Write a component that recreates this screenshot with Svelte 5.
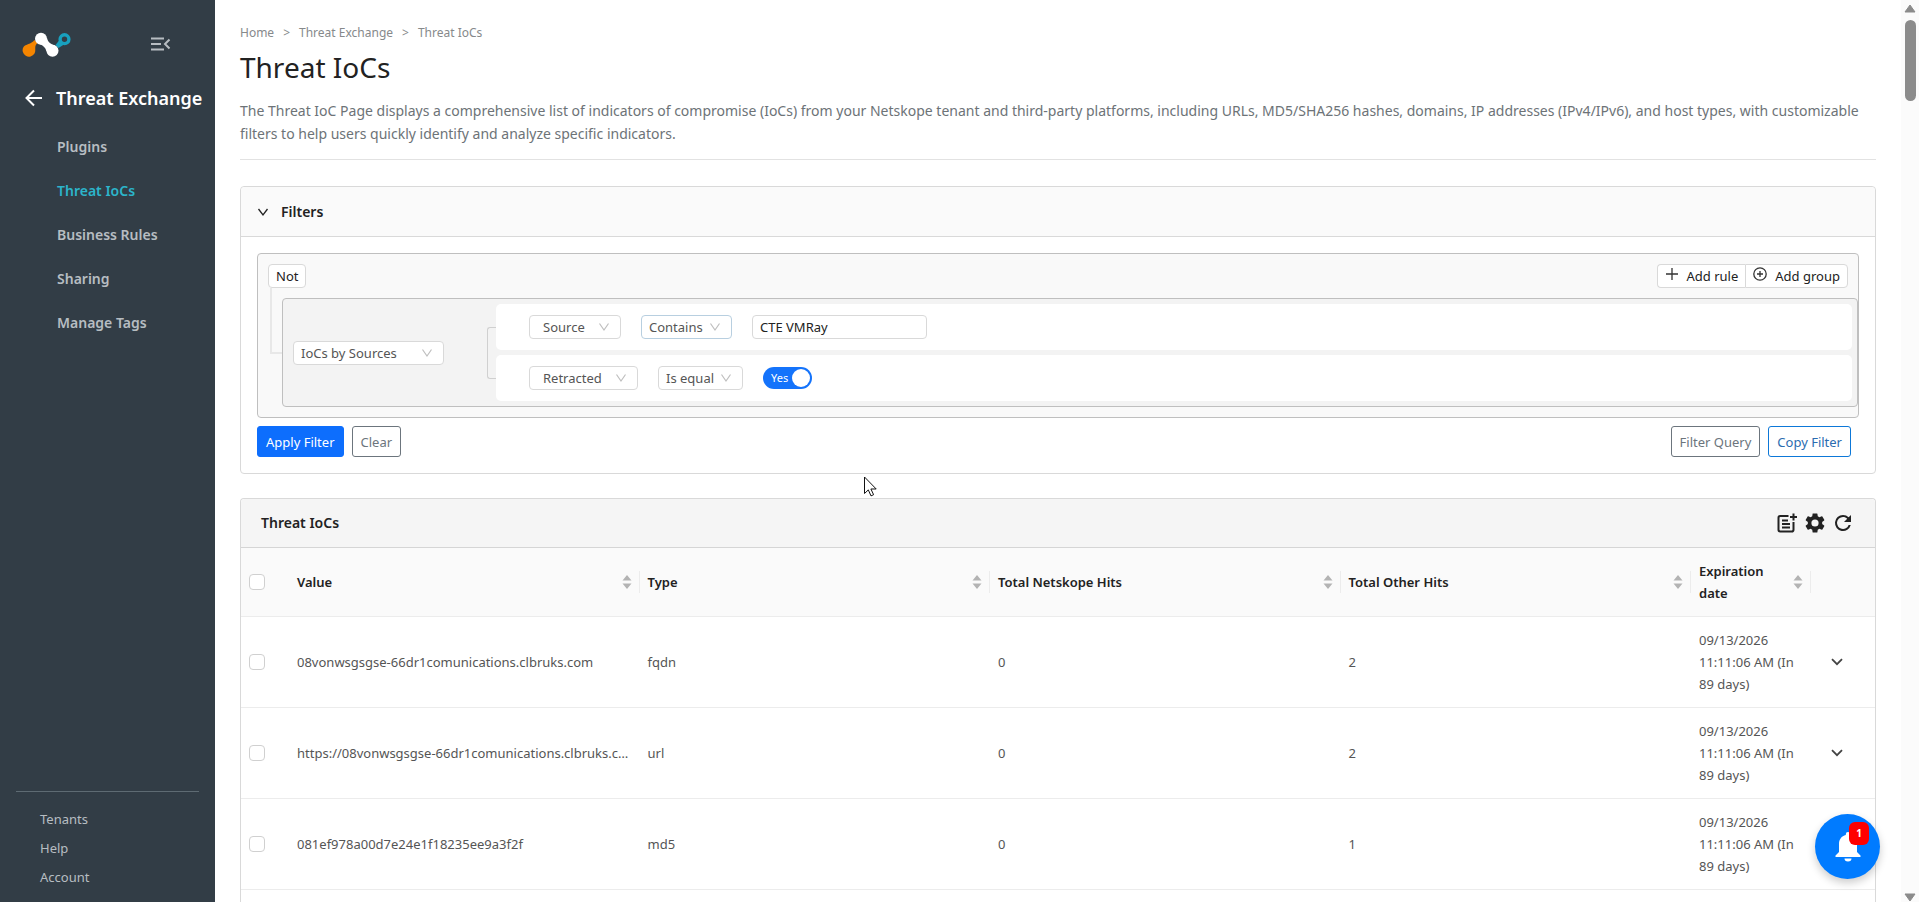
<script>
	const navItems = ["Plugins", "Threat IoCs", "Business Rules", "Sharing", "Manage Tags"];
	const footerItems = ["Tenants", "Help", "Account"];

	const columns = [
		{ key: "value", label: "Value" },
		{ key: "type", label: "Type" },
		{ key: "netskope", label: "Total Netskope Hits" },
		{ key: "other", label: "Total Other Hits" },
		{ key: "expiration", label: "Expiration date" },
	];

	const expiration = "09/13/2026 11:11:06 AM (In 89 days)";
	const rows = [
		{ value: "08vonwsgsgse-66dr1comunications.clbruks.com", type: "fqdn", netskope: 0, other: 2, expiration },
		{ value: "https://08vonwsgsgse-66dr1comunications.clbruks.com", type: "url", netskope: 0, other: 2, expiration },
		{ value: "081ef978a00d7e24e1f18235ee9a3f2f", type: "md5", netskope: 0, other: 1, expiration },
	];

	let activeItem = $state("Threat IoCs");
	let filtersOpen = $state(true);
	let sourceValue = $state("CTE VMRay");
	let retracted = $state(true);
	let selected = $state([]);

	function toggleAll(event) {
		selected = event.currentTarget.checked ? rows.map((row) => row.value) : [];
	}
</script>

{#snippet dropdown(label, text, size)}
	<span class="select select-{size}">
		<select aria-label={label}>
			<option>{text}</option>
		</select>
		<svg viewBox="0 0 12 12" aria-hidden="true"><path d="M1.5 2.5L6 9l4.5-6.5" /></svg>
	</span>
{/snippet}

<div class="app">
	<aside class="sidebar">
		<div class="brand">
			<svg class="logo" viewBox="0 0 50 26" role="img" aria-label="Netskope">
				<path d="M1.500 15C3.500 12 9 12.500 12.500 8L15.500 11C11.500 14 14.500 18 12.500 21.500A6.200 6.200 0 1 1 1.500 15Z" fill="#f58500" />
				<path d="M37.500 8L33.500 13L36.500 16L42 12.500Z" fill="#18a0be" />
				<circle cx="42.500" cy="7.200" r="4.400" fill="none" stroke="#18a0be" stroke-width="3.400" />
				<circle cx="19" cy="6.700" r="6" fill="#fff" />
				<circle cx="30.500" cy="18.800" r="6" fill="#fff" />
				<path d="M16 11.500C20.500 13 23.500 15 24.500 19.500L33.500 13.500C29 12.500 26 10.500 25 6Z" fill="#fff" />
			</svg>
			<button class="icon-button collapse" aria-label="Collapse menu">
				<svg viewBox="0 0 20 14" aria-hidden="true"><path d="M0 1.500h13M0 7h10M0 12.500h13M18.500 2.500L14 7l4.500 4.500" /></svg>
			</button>
		</div>
		<div class="section">
			<button class="icon-button back" aria-label="Back">
				<svg viewBox="0 0 18 18" aria-hidden="true"><path d="M17 9H2M9 1.500L1.500 9L9 16.500" /></svg>
			</button>
			<span class="section-name">Threat Exchange</span>
		</div>
		<nav class="nav">
			{#each navItems as item (item)}
				<a href="#/" class:active={activeItem === item} onclick={() => (activeItem = item)}>{item}</a>
			{/each}
		</nav>
		<nav class="footer-nav">
			{#each footerItems as item (item)}
				<a href="#/">{item}</a>
			{/each}
		</nav>
	</aside>

	<main class="main">
		<nav class="breadcrumb" aria-label="Breadcrumb">
			<a href="#/">Home</a>
			<span>&gt;</span>
			<a href="#/">Threat Exchange</a>
			<span>&gt;</span>
			<a href="#/">Threat IoCs</a>
		</nav>
		<h1>Threat IoCs</h1>
		<p class="description">
			The Threat IoC Page displays a comprehensive list of indicators of compromise (IoCs) from your Netskope tenant and third-party platforms, including URLs, MD5/SHA256 hashes, domains, IP addresses (IPv4/IPv6), and host types, with customizable filters to help users quickly identify and analyze specific indicators.
		</p>

		<section class="panel filters">
			<button class="filters-header" aria-expanded={filtersOpen} onclick={() => (filtersOpen = !filtersOpen)}>
				<svg viewBox="0 0 12 12" aria-hidden="true"><path d="M1.500 3L6 9l4.500-6" /></svg>
				Filters
			</button>
			{#if filtersOpen}
				<div class="filters-body">
					<div class="group">
						<div class="group-header">
							<button class="small-button">Not</button>
							<div class="button-group">
								<button class="small-button">
									<svg viewBox="0 0 14 14" aria-hidden="true"><path d="M7 1v12M1 7h12" /></svg>
									Add rule
								</button>
								<button class="small-button">
									<svg viewBox="0 0 14 14" aria-hidden="true"><circle cx="7" cy="7" r="6.200" /><path d="M7 4v6M4 7h6" /></svg>
									Add group
								</button>
							</div>
						</div>
						<div class="group-children">
							<span class="branch"></span>
							<div class="rule-group">
								<div class="rule-field">
									{@render dropdown("Group field", "IoCs by Sources", "large")}
								</div>
								<span class="fork"></span>
								<div class="rules">
									<div class="rule">
										{@render dropdown("Field", "Source", "source")}
										{@render dropdown("Operator", "Contains", "contains")}
										<input class="text-input" type="text" aria-label="Source value" bind:value={sourceValue} />
									</div>
									<div class="rule">
										{@render dropdown("Field", "Retracted", "retracted")}
										{@render dropdown("Operator", "Is equal", "equal")}
										<label class="switch" class:off={!retracted}>
											<input type="checkbox" role="switch" bind:checked={retracted} />
											<span>{retracted ? "Yes" : "No"}</span>
										</label>
									</div>
								</div>
							</div>
						</div>
					</div>
					<div class="actions">
						<button class="button primary">Apply Filter</button>
						<button class="button">Clear</button>
						<button class="button push">Filter Query</button>
						<button class="button outline">Copy Filter</button>
					</div>
				</div>
			{/if}
		</section>

		<section class="panel iocs">
			<header class="iocs-header">
				<h2>Threat IoCs</h2>
				<div class="tools">
					<button class="icon-button" aria-label="Add columns">
						<svg viewBox="0 0 20 20" aria-hidden="true">
							<path d="M11.500 3H3.300C2.300 3 1.500 3.800 1.500 4.800V16.700C1.500 17.700 2.300 18.500 3.300 18.500H14.700C15.700 18.500 16.500 17.700 16.500 16.700V9M5 7.500H11M5 11H13M5 14.500H13M16.500 .5V7.500M13 4H20" />
						</svg>
					</button>
					<button class="icon-button" aria-label="Settings">
						<svg class="filled" viewBox="2 2 20 20" aria-hidden="true">
							<path d="M19.140 12.940c.040-.3.060-.610.060-.940s-.020-.640-.070-.940l2.030-1.580a.49.49 0 0 0 .12-.61l-1.920-3.320a.488.488 0 0 0-.59-.22l-2.390.96c-.5-.38-1.030-.7-1.620-.94l-.36-2.540a.484.484 0 0 0-.48-.41h-3.840c-.24 0-.43.170-.470.410l-.36 2.540c-.59.240-1.130.570-1.620.940l-2.390-.96c-.22-.08-.47 0-.59.220L2.740 8.870c-.12.210-.08.470.12.610l2.030 1.580c-.05.3-.09.630-.09.940s.020.640.070.940l-2.030 1.580a.49.49 0 0 0-.12.610l1.920 3.320c.12.220.37.290.59.220l2.390-.96c.5.380 1.030.7 1.620.940l.36 2.540c.05.240.24.410.48.410h3.840c.24 0 .44-.17.470-.41l.36-2.540c.59-.24 1.130-.56 1.620-.94l2.390.96c.22.080.47 0 .59-.22l1.920-3.320c.12-.22.070-.47-.12-.61l-2.010-1.580zM12 15.600a3.600 3.600 0 1 1 0-7.200 3.600 3.600 0 0 1 0 7.200z" />
						</svg>
					</button>
					<button class="icon-button" aria-label="Refresh">
						<svg class="filled" viewBox="2 2 20 20" aria-hidden="true">
							<path d="M17.650 6.350A7.960 7.960 0 0 0 12 4a8 8 0 1 0 7.730 10h-2.080A6 6 0 1 1 12 6c1.660 0 3.140.690 4.220 1.780L13 11h7V4l-2.350 2.350z" />
						</svg>
					</button>
				</div>
			</header>
			<table>
				<colgroup>
					<col class="col-check" />
					<col />
					<col />
					<col />
					<col />
					<col class="col-date" />
					<col class="col-expand" />
				</colgroup>
				<thead>
					<tr>
						<th><input class="check" type="checkbox" aria-label="Select all" onchange={toggleAll} /></th>
						{#each columns as column (column.key)}
							<th>
								<div class="column-title">
									<span>{column.label}</span>
									<svg viewBox="0 0 10 14" aria-hidden="true"><path d="M5 0l4.500 5.500h-9zM5 14l4.500-5.500h-9z" /></svg>
								</div>
							</th>
						{/each}
						<th></th>
					</tr>
				</thead>
				<tbody>
					{#each rows as row (row.value)}
						<tr>
							<td><input class="check" type="checkbox" aria-label="Select {row.value}" value={row.value} bind:group={selected} /></td>
							{#each columns as column (column.key)}
								<td class:ellipsis={column.key === "value"}>{row[column.key]}</td>
							{/each}
							<td class="expand">
								<button class="icon-button" aria-label="Expand row">
									<svg viewBox="0 0 12 8" aria-hidden="true"><path d="M1 1.200L6 6.200l5-5" /></svg>
								</button>
							</td>
						</tr>
					{/each}
				</tbody>
			</table>
		</section>
	</main>

	<div class="scrollbar" aria-hidden="true">
		<svg viewBox="0 0 12 9"><path d="M6 1L11 8H1z" /></svg>
		<span></span>
		<svg viewBox="0 0 12 9"><path d="M6 8L11 1H1z" /></svg>
	</div>

	<button class="notifications" aria-label="Notifications">
		<svg viewBox="0 0 26 30" aria-hidden="true">
			<path d="M13 0a2.200 2.200 0 0 0-2.200 2.200v.8C6.500 4 4 7.500 4 12v8l-3.500 3.500V25h25v-1.500L22 20v-8c0-4.500-2.500-8-6.800-9v-.8A2.200 2.200 0 0 0 13 0zM9.500 26.500a3.500 3 0 0 0 7 0z" />
		</svg>
		<span class="badge">1</span>
	</button>

	<svg class="pointer" viewBox="0 0 13 21" aria-hidden="true">
		<path d="M.5 1v16.500l3.800-3.600 2.700 6 2.600-1.200-2.700-5.700h5.300z" />
	</svg>
</div>

<style>
	:global(body) {
		background: #fff;
		font-family: "Noto Sans", "Open Sans", sans-serif;
		font-size: 13px;
		line-height: 22px;
		color: #555;
	}

	.app,
	.app * {
		box-sizing: border-box;
	}

	.app {
		display: grid;
		grid-template-columns: 215px minmax(0, 1fr) 18px;
		height: 100vh;
	}

	a {
		color: inherit;
		text-decoration: none;
	}

	button,
	input,
	select {
		font: inherit;
		color: inherit;
		margin: 0;
	}

	button {
		cursor: pointer;
	}

	.icon-button {
		display: flex;
		padding: 0;
		border: 0;
		background: none;
	}

	/* sidebar */
	.sidebar {
		display: flex;
		flex-direction: column;
		background: #323d46;
		color: #b7bdc2;
	}

	.brand {
		display: flex;
		align-items: flex-start;
		justify-content: space-between;
		padding: 32px 44px 0 22px;
	}

	.logo {
		width: 50px;
		height: 26px;
	}

	.collapse svg {
		width: 20px;
		height: 14px;
		margin-top: 5px;
		fill: none;
		stroke: #b7bdc2;
		stroke-width: 2;
	}

	.section {
		display: flex;
		align-items: center;
		gap: 13px;
		padding: 27px 0 0 25px;
		color: #fff;
	}

	.back svg {
		width: 18px;
		height: 18px;
		fill: none;
		stroke: currentColor;
		stroke-width: 2;
	}

	.section-name {
		font-size: 18px;
		line-height: 26px;
		font-weight: 600;
		white-space: nowrap;
	}

	.nav {
		display: flex;
		flex-direction: column;
		padding: 14px 0 0 57px;
		font-size: 14px;
		line-height: 44px;
		font-weight: 600;
	}

	.nav .active {
		color: #2cb5cb;
	}

	.footer-nav {
		display: flex;
		flex-direction: column;
		margin: auto 16px 0;
		padding: 13px 0 10px 24px;
		border-top: 1px solid #5e6b73;
		line-height: 29px;
	}

	/* page heading */
	.main {
		display: flex;
		flex-direction: column;
		padding: 22px 25px 0;
		overflow-y: auto;
		scrollbar-width: none;
	}

	.breadcrumb {
		display: flex;
		gap: 9px;
		font-size: 12px;
		color: #86898b;
	}

	h1 {
		margin: 3px 0 0;
		font-size: 28px;
		line-height: 40px;
		font-weight: 400;
		color: #222;
	}

	.description {
		margin: 12px 0 26px;
		padding-bottom: 14px;
		border-bottom: 1px solid #e2e2e2;
		font-size: 14px;
		line-height: 23px;
		color: #6d7377;
	}

	.panel {
		border: 1px solid #d9d9d9;
		border-radius: 4px;
	}

	/* filters */
	.filters-header {
		display: flex;
		align-items: center;
		gap: 12px;
		width: 100%;
		height: 50px;
		padding: 0 16px;
		border: 0;
		border-bottom: 1px solid #d9d9d9;
		border-radius: 4px 4px 0 0;
		background: #fafafa;
		font-size: 14px;
		font-weight: 600;
		color: #222;
	}

	.filters-header svg {
		width: 12px;
		height: 12px;
		fill: none;
		stroke: #222;
		stroke-width: 1.3;
	}

	.filters-body {
		padding: 16px;
	}

	.group {
		padding: 10px 0;
		border: 1px solid #bfbfbf;
		border-radius: 4px;
		background: #f9f9f9;
	}

	.group-header {
		display: flex;
		justify-content: space-between;
		padding: 0 10px;
	}

	.small-button {
		display: flex;
		align-items: center;
		gap: 8px;
		height: 24px;
		padding: 0 7px;
		border: 1px solid #d9d9d9;
		border-radius: 4px;
		background: #fff;
		color: #222;
	}

	.small-button svg {
		width: 14px;
		height: 14px;
		margin-bottom: 4px;
		fill: none;
		stroke: #333;
		stroke-width: 1.3;
	}

	.button-group {
		display: flex;
	}

	.button-group .small-button:first-child {
		border-right: 0;
		border-radius: 4px 0 0 4px;
	}

	.button-group .small-button:last-child {
		border-radius: 0 4px 4px 0;
	}

	.group-children {
		display: flex;
		align-items: flex-start;
		padding-left: 12px;
	}

	.branch {
		width: 12px;
		height: 66px;
		border-left: 2px solid #e8e8e8;
		border-bottom: 2px solid #e8e8e8;
	}

	.rule-group {
		display: flex;
		flex: 1;
		align-items: center;
		margin-top: 10px;
		padding: 5px;
		border: 1px solid #bfbfbf;
		border-radius: 4px;
		background: #f3f3f3;
	}

	.rule-field {
		width: 199px;
		padding-left: 5px;
	}

	.fork {
		width: 9px;
		height: 52px;
		border: 1px solid #d0d0d0;
		border-right: 0;
		border-radius: 3px 0 0 3px;
	}

	.rules {
		display: flex;
		flex: 1;
		flex-direction: column;
		gap: 5px;
	}

	.rule {
		display: flex;
		align-items: center;
		gap: 20px;
		height: 46px;
		padding-left: 33px;
		border-radius: 5px;
		background: #fff;
	}

	.select {
		display: inline-grid;
		align-items: center;
		height: 24px;
	}

	.select select,
	.select svg {
		grid-area: 1 / 1;
	}

	.select select {
		width: 100%;
		height: 24px;
		padding: 0 7px;
		border: 1px solid #d9d9d9;
		border-radius: 4px;
		background: #fff;
		appearance: none;
	}

	.select svg {
		justify-self: end;
		width: 12px;
		height: 12px;
		margin-right: 11px;
		fill: none;
		stroke: #bfbfbf;
		stroke-width: 1.2;
		pointer-events: none;
	}

	.select-large {
		width: 151px;
	}

	.select-source {
		width: 92px;
	}

	.select-contains {
		width: 91px;
	}

	.select-contains select {
		border-color: #b8cfe0;
	}

	.select-retracted {
		width: 109px;
	}

	.select-equal {
		width: 85px;
	}

	.select-source select,
	.select-retracted select {
		padding-left: 13px;
	}

	.text-input {
		width: 175px;
		height: 24px;
		padding: 0 7px;
		border: 1px solid #d9d9d9;
		border-radius: 4px;
		background: #fff;
		color: #222;
	}

	.switch {
		display: flex;
		align-items: center;
		width: 49px;
		height: 22px;
		padding: 0 2px 0 8px;
		border-radius: 11px;
		background: #1473fb;
		font-size: 11px;
		color: #fff;
		cursor: pointer;
	}

	.switch input {
		order: 1;
		width: 18px;
		height: 18px;
		margin-left: auto;
		border-radius: 50%;
		background: #fff;
		appearance: none;
	}

	.switch.off {
		background: #bfbfbf;
	}

	.actions {
		display: flex;
		gap: 8px;
		padding: 8px 8px 0 0;
	}

	.button {
		height: 31px;
		padding: 0 8px;
		border: 1px solid #6c757d;
		border-radius: 3px;
		background: #fff;
		color: #6c757d;
	}

	.primary {
		border-color: #0d6efd;
		background: #0d6efd;
		color: #fff;
	}

	.outline {
		border-color: #0d78d8;
		color: #2b6cb0;
	}

	.push {
		margin-left: auto;
	}

	/* table */
	.iocs {
		flex: 1 0 auto;
		margin-top: 24px;
		border-bottom: 0;
		border-radius: 4px 4px 0 0;
	}

	.iocs-header {
		display: flex;
		align-items: center;
		justify-content: space-between;
		height: 49px;
		padding: 0 22px 0 20px;
		border-bottom: 1px solid #d5d5d5;
		border-radius: 4px 4px 0 0;
		background: #f5f5f5;
	}

	h2 {
		margin: 0;
		font-size: 14px;
		font-weight: 600;
		color: #222;
	}

	.tools {
		display: flex;
		gap: 8px;
	}

	.tools svg {
		width: 20px;
		height: 20px;
		fill: none;
		stroke: #222;
		stroke-width: 2;
	}

	.tools .filled {
		fill: #222;
		stroke: none;
	}

	table {
		width: 100%;
		border-collapse: collapse;
		table-layout: fixed;
	}

	.col-check {
		width: 48px;
	}

	.col-date {
		width: 120px;
	}

	.col-expand {
		width: 64px;
	}

	th,
	td {
		padding: 12px 8px;
		border-bottom: 1px solid #ececec;
		text-align: left;
		vertical-align: middle;
	}

	th {
		background: #fafafa;
		font-weight: 600;
		color: #222;
	}

	.column-title {
		display: flex;
		align-items: center;
		justify-content: space-between;
		min-height: 44px;
	}

	.column-title svg {
		flex: none;
		width: 10px;
		height: 14px;
		fill: #b3b3b3;
	}

	th:not(:first-child):not(:last-child) {
		background: linear-gradient(#ececec, #ececec) right center / 1px 22px no-repeat #fafafa;
	}

	.ellipsis {
		overflow: hidden;
		text-overflow: ellipsis;
		white-space: nowrap;
	}

	.check {
		display: block;
		width: 16px;
		height: 16px;
		border: 1px solid #d0d0d0;
		border-radius: 4px;
		background: #fff;
		appearance: none;
	}

	.check:checked {
		border-color: #1473fb;
		background: #1473fb;
	}

	.expand {
		padding-left: 20px;
	}

	.expand svg {
		width: 12px;
		height: 8px;
		fill: none;
		stroke: #444;
		stroke-width: 1.8;
	}

	.scrollbar {
		display: flex;
		flex-direction: column;
		align-items: center;
		padding: 4px 0 0;
		background: #fbfbfb;
	}

	.scrollbar svg {
		width: 12px;
		height: 9px;
		fill: #8b8b8b;
		stroke: #8b8b8b;
		stroke-linejoin: round;
	}

	.scrollbar svg:last-child {
		margin-top: auto;
	}

	.scrollbar span {
		width: 11px;
		height: 81px;
		margin-top: 7px;
		border-radius: 6px;
		background: #8b8b8b;
	}

	.notifications {
		position: fixed;
		right: 39px;
		bottom: 23px;
		display: flex;
		align-items: center;
		justify-content: center;
		width: 65px;
		height: 65px;
		padding: 0;
		border: 0;
		border-radius: 50%;
		background: #007bff;
		box-shadow: 0 4px 8px rgba(0, 0, 0, 0.2);
	}

	.notifications svg {
		width: 26px;
		height: 30px;
		fill: #fff;
	}

	.badge {
		position: absolute;
		top: 8px;
		right: 11px;
		width: 20px;
		height: 23px;
		border-radius: 6px;
		background: #f00;
		color: #fff;
		font-size: 10px;
		line-height: 23px;
		font-weight: 700;
	}

	.pointer {
		position: fixed;
		top: 476px;
		left: 864px;
		width: 13px;
		height: 21px;
		fill: #fff;
		stroke: #111;
		pointer-events: none;
	}
</style>
